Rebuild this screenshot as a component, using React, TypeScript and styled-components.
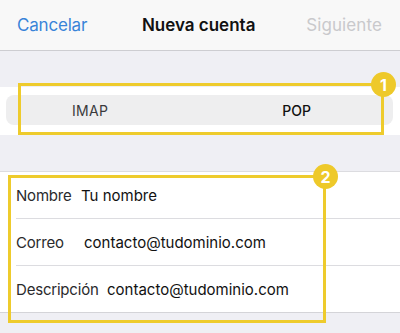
import React from 'react'

import styled, { createGlobalStyle } from 'styled-components'

const GlobalStyle = createGlobalStyle`
  body {
    margin: 0;
    background: #efeff4;
    font-family: 'Inter', 'Roboto', sans-serif;
    -webkit-font-smoothing: antialiased;
  }
`

const Page = styled.div`
  display: flex;
  flex-direction: column;
  width: 400px;
  height: 333px;
  overflow: hidden;
  background: #efeff4;
`

const NavBar = styled.header`
  display: flex;
  align-items: center;
  justify-content: space-between;
  height: 50px;
  padding: 0 18px 0 17px;
  background: #f8f8f8;
  border-bottom: 1px solid #cdcdd1;
  font-size: 17px;
`

const NavButton = styled.span<{ $disabled?: boolean }>`
  color: ${(p) => (p.$disabled ? '#c9c9cc' : '#3884d8')};
  letter-spacing: ${(p) => (p.$disabled ? '0.1px' : '-0.2px')};
`

const NavTitle = styled.span`
  font-weight: 600;
  color: #111;
  letter-spacing: 0;
  margin-left: 4px;
`

const Section = styled.section<{ $top: number }>`
  position: relative;
  margin-top: ${(p) => p.$top}px;
  background: #fff;
`

const SegmentWrap = styled.div`
  padding: 8px 7px 10px 6px;
`

const Segmented = styled.div`
  display: flex;
  align-items: center;
  justify-content: space-between;
  height: 30px;
  padding: 0 82px 0 66px;
  background: #eeeeef;
  border-radius: 8px;
  font-size: 14px;
`

const Segment = styled.span<{ $light?: boolean }>`
  color: ${(p) => (p.$light ? '#3a3a3c' : '#111')};
  font-weight: ${(p) => (p.$light ? 400 : 500)};
  letter-spacing: ${(p) => (p.$light ? '0.3px' : '0')};
`

const List = styled.div`
  border-top: 1px solid #dcdce0;
  border-bottom: 1px solid #d4d4d8;
`

const Row = styled.div<{ $labelWidth: number }>`
  display: grid;
  grid-template-columns: ${(p) => p.$labelWidth}px 1fr;
  align-items: center;
  height: 46px;
  margin-left: 16px;
  font-size: 15px;

  & + & {
    border-top: 1px solid #dcdce0;
  }
`

const Label = styled.span`
  color: #2a2a2c;
  white-space: nowrap;
  letter-spacing: -0.2px;
`

const Value = styled.span`
  color: #111;
  white-space: nowrap;
`

const Highlight = styled.div<{ $left: number; $top: number; $width: number; $height: number }>`
  position: absolute;
  left: ${(p) => p.$left}px;
  top: ${(p) => p.$top}px;
  width: ${(p) => p.$width}px;
  height: ${(p) => p.$height}px;
  box-sizing: border-box;
  border: 3px solid #eecb2c;
  pointer-events: none;
`

const Badge = styled.span`
  position: absolute;
  right: -15px;
  top: -14px;
  width: 25px;
  height: 25px;
  border-radius: 50%;
  background: #eec92a;
  color: #fff;
  font-size: 16px;
  font-weight: 700;
  display: flex;
  align-items: center;
  justify-content: center;
`

const rows = [
  { label: 'Nombre', value: 'Tu nombre', width: 65 },
  { label: 'Correo', value: 'contacto@tudominio.com', width: 68 },
  { label: 'Descripción', value: 'contacto@tudominio.com', width: 91 },
]

const App = () => {
  return (
    <>
      <GlobalStyle />
      <Page>
        <NavBar>
          <NavButton>Cancelar</NavButton>
          <NavTitle>Nueva cuenta</NavTitle>
          <NavButton $disabled>Siguiente</NavButton>
        </NavBar>
        <Section $top={36}>
          <SegmentWrap>
            <Segmented>
              <Segment $light>IMAP</Segment>
              <Segment>POP</Segment>
            </Segmented>
          </SegmentWrap>
          <Highlight $left={18} $top={-4} $width={366} $height={52}>
            <Badge>1</Badge>
          </Highlight>
        </Section>
        <Section $top={36}>
          <List>
            {rows.map((r) => (
              <Row key={r.label} $labelWidth={r.width}>
                <Label>{r.label}</Label>
                <Value>{r.value}</Value>
              </Row>
            ))}
          </List>
          <Highlight $left={8} $top={4} $width={318} $height={148}>
            <Badge>2</Badge>
          </Highlight>
        </Section>
      </Page>
    </>
  )
}

export default App
